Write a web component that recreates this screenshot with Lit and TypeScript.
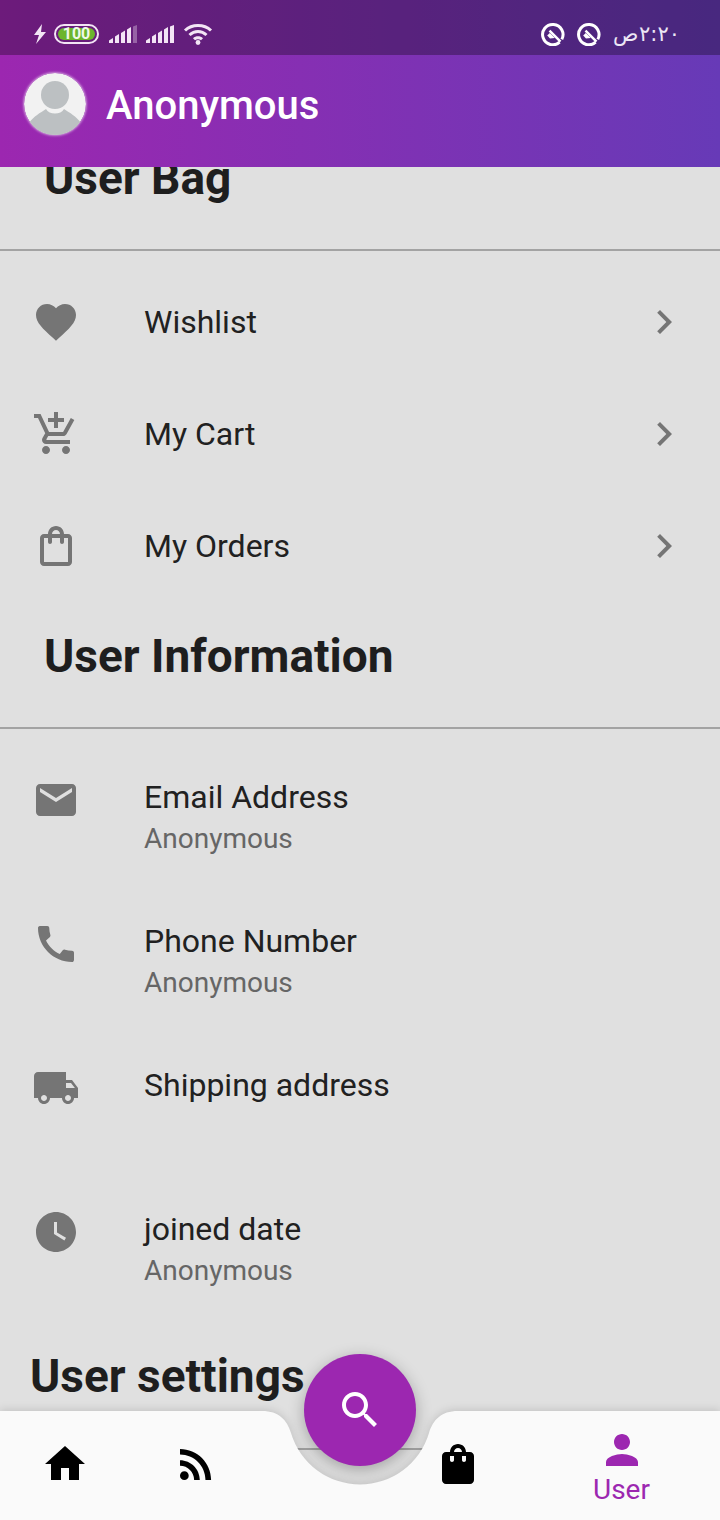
import { LitElement, html, css, svg } from 'lit';
import { customElement } from 'lit/decorators.js';

const ICONS: Record<string, string> = {
  heart: 'M12 21.35l-1.45-1.32C5.4 15.36 2 12.28 2 8.5 2 5.42 4.42 3 7.5 3c1.74 0 3.41.81 4.5 2.09C13.09 3.81 14.76 3 16.5 3 19.58 3 22 5.42 22 8.5c0 3.78-3.4 6.86-8.55 11.54L12 21.35z',
  cart: 'M11 9h2V6h3V4h-3V1h-2v3H8v2h3v3zm-4 9c-1.1 0-1.99.9-1.99 2S5.9 22 7 22s2-.9 2-2-.9-2-2-2zm10 0c-1.1 0-1.99.9-1.99 2s.89 2 1.99 2 2-.9 2-2-.9-2-2-2zm-9.83-3.25l.03-.12.9-1.63h7.45c.75 0 1.41-.41 1.75-1.03l3.86-7.01L19.42 4h-.01l-1.1 2-2.76 5H8.53l-.13-.27L6.16 6l-.95-2-.94-2H1v2h2l3.6 7.59-1.35 2.45c-.16.28-.25.61-.25.96 0 1.1.9 2 2 2h12v-2H7.42c-.13 0-.25-.11-.25-.25z',
  bagOutline: 'M18 6h-2c0-2.21-1.79-4-4-4S8 3.79 8 6H6c-1.1 0-2 .9-2 2v12c0 1.1.9 2 2 2h12c1.1 0 2-.9 2-2V8c0-1.1-.9-2-2-2zm-6-2c1.1 0 2 .9 2 2h-4c0-1.1.9-2 2-2zm6 16H6V8h2v2c0 .55.45 1 1 1s1-.45 1-1V8h4v2c0 .55.45 1 1 1s1-.45 1-1V8h2v12z',
  email: 'M20 4H4c-1.1 0-1.99.9-1.99 2L2 18c0 1.1.9 2 2 2h16c1.1 0 2-.9 2-2V6c0-1.1-.9-2-2-2zm0 4l-8 5-8-5V6l8 5 8-5v2z',
  phone: 'M20.01 15.38c-1.23 0-2.42-.2-3.53-.56-.35-.12-.74-.03-1.01.24l-1.57 1.97c-2.83-1.35-5.48-3.9-6.89-6.83l1.95-1.66c.27-.28.35-.67.24-1.02-.37-1.11-.56-2.3-.56-3.53 0-.54-.45-.99-.99-.99H4.19C3.65 3 3 3.24 3 3.99 3 13.28 10.73 21 20.01 21c.71 0 .99-.63.99-1.18v-3.45c0-.54-.45-.99-.99-.99z',
  truck: 'M20 8h-3V4H3c-1.1 0-2 .9-2 2v11h2c0 1.66 1.34 3 3 3s3-1.34 3-3h6c0 1.66 1.34 3 3 3s3-1.34 3-3h2v-5l-3-4zM6 18.5c-.83 0-1.5-.67-1.5-1.5s.67-1.5 1.5-1.5 1.5.67 1.5 1.5-.67 1.5-1.5 1.5zm13.5-9l1.96 2.5H17V9.5h2.5zm-1.5 9c-.83 0-1.5-.67-1.5-1.5s.67-1.5 1.5-1.5 1.5.67 1.5 1.5-.67 1.5-1.5 1.5z',
  clock: 'M12 2C6.5 2 2 6.5 2 12s4.5 10 10 10 10-4.5 10-10S17.5 2 12 2zm4.2 14.2L11 13V7h1.5v5.2l4.5 2.7-.8 1.3z',
  chevron: 'M10 6L8.59 7.41 13.17 12l-4.58 4.59L10 18l6-6z',
  home: 'M10 20v-6h4v6h5v-8h3L12 3 2 12h3v8z',
  rss: 'M6.18 15.64a2.18 2.18 0 1 0 0 4.36 2.18 2.18 0 0 0 0-4.36zM4 4.44v2.83c7.03 0 12.73 5.7 12.73 12.73h2.83c0-8.59-6.97-15.56-15.56-15.56zM4 10.1v2.83c3.9 0 7.07 3.17 7.07 7.07h2.83c0-5.47-4.43-9.9-9.9-9.9z',
  bag: 'M18 6h-2c0-2.21-1.79-4-4-4S8 3.79 8 6H6C4.9 6 4 6.9 4 8v12c0 1.1.9 2 2 2h12c1.1 0 2-.9 2-2V8c0-1.1-.9-2-2-2zM10 10c0 .55-.45 1-1 1s-1-.45-1-1V8h2v2zM12 4c1.1 0 2 .9 2 2h-4c0-1.1.9-2 2-2zM16 10c0 .55-.45 1-1 1s-1-.45-1-1V8h2v2z',
  person: 'M12 12c2.21 0 4-1.79 4-4s-1.79-4-4-4-4 1.79-4 4 1.79 4 4 4zm0 2c-2.67 0-8 1.34-8 4v2h16v-2c0-2.66-5.33-4-8-4z',
  search: 'M15.5 14h-.79l-.28-.27C15.41 12.59 16 11.11 16 9.5 16 5.91 13.09 3 9.5 3S3 5.91 3 9.5 5.91 16 9.5 16c1.61 0 3.09-.59 4.23-1.57l.27.28v.79l5 4.99L20.49 19l-4.99-5zm-6 0C7.01 14 5 11.99 5 9.5S7.01 5 9.5 5 14 7.01 14 9.5 11.99 14 9.5 14z',
};

const icon = (name: string) => html`<svg class="icon" viewBox="0 0 24 24"><path fill-rule="evenodd" d=${ICONS[name]}></path></svg>`;

// five bars with slanted tops, the last one greyed out on the first sim
const signal = (dim: boolean) => html`
  <svg class="signal" width="28" height="18" viewBox="0 0 28 18">
    <path d="M0 15.5 L4 13 V18 H0 Z"></path>
    <path d="M6 11.5 L10 9 V18 H6 Z"></path>
    <path d="M12 8 L16 5.5 V18 H12 Z"></path>
    <path d="M18 4.5 L22 2 V18 H18 Z"></path>
    <path d="M24 1.5 L28 0 V18 H24 Z" opacity=${dim ? 0.35 : 1}></path>
  </svg>`;

const dndRing = svg`
  <path d="M18.6 20.2 A10.2 10.2 0 1 1 20.8 17.4" fill="none" stroke="#fff" stroke-width="3"></path>
  <path d="M8.5 8.6 L19.5 19.6" fill="none" stroke="#fff" stroke-width="2.4"></path>
  <path d="M6.2 13.4 L8.8 11 L13.8 16 L9 16.6 Z" fill="#fff"></path>`;

@customElement('app-root')
export class AppRoot extends LitElement {
  static styles = css`
    :host {
      display: block;
      font-family: Roboto, 'Noto Sans', sans-serif;
    }
    .app {
      position: relative;
      width: 720px;
      height: 1520px;
      overflow: hidden;
      background: #e0e0e0;
      display: flex;
      flex-direction: column;
    }
    .header {
      position: relative;
      z-index: 2;
      flex: none;
      background: linear-gradient(90deg, #9c27b0, #673ab7);
    }
    .status {
      height: 55px;
      box-sizing: border-box;
      padding: 13px 40px 0 32px;
      display: flex;
      align-items: center;
      background: rgba(0, 0, 0, 0.3);
      color: #fff;
    }
    .status svg {
      display: block;
      fill: #f3e5f5;
    }
    .bolt {
      margin-right: 6px;
    }
    .battery {
      width: 45px;
      height: 20px;
      box-sizing: border-box;
      border: 2px solid #f3e5f5;
      border-radius: 10px;
      padding: 2px;
      margin-right: 10px;
    }
    .battery span {
      display: flex;
      align-items: center;
      justify-content: center;
      height: 100%;
      border-radius: 6px;
      background: #6cb52d;
      font-size: 16px;
      font-weight: 700;
      line-height: 12px;
      color: #f1f8e9;
    }
    .signal {
      margin-right: 9px;
    }
    .spacer {
      flex: 1;
    }
    .dnd {
      margin-right: 12px;
    }
    .time {
      font-family: 'DejaVu Sans', sans-serif;
      font-size: 21px;
      word-spacing: -6px;
      color: #ede7f6;
    }
    .toolbar {
      height: 112px;
      box-sizing: border-box;
      padding: 0 0 14px 24px;
      display: flex;
      align-items: center;
      gap: 20px;
    }
    .avatar {
      width: 62px;
      height: 62px;
      border-radius: 50%;
      box-shadow: 0 0 3px #fff;
      display: block;
    }
    .name {
      padding-top: 2px;
      font-size: 40px;
      font-weight: 500;
      color: #fff;
    }
    .content {
      flex: none;
      margin-top: -43px;
    }
    .section-title {
      box-sizing: border-box;
      height: 127px;
      padding: 28px 0 0 44px;
      font-size: 46px;
      font-weight: 700;
      line-height: 52px;
      color: #1e1e1e;
      border-bottom: 2px solid #a3a3a3;
      margin-bottom: 15px;
    }
    .section-title.flush {
      height: 130px;
      padding: 30px 0 0 30px;
    }
    .row {
      display: flex;
      align-items: center;
      height: 112px;
      padding: 0 32px;
    }
    .row .icon {
      width: 48px;
      height: 48px;
      flex: none;
      display: block;
      fill: #757575;
    }
    .lead {
      margin-right: 64px;
    }
    .row.tall {
      height: 144px;
      align-items: flex-start;
      padding-top: 32px;
      box-sizing: border-box;
    }
    .title {
      flex: 1;
      font-size: 32px;
      line-height: 42px;
      color: #212121;
    }
    .sub {
      font-size: 28px;
      line-height: 42px;
      height: 40px;
      color: #666;
    }
    .fab {
      position: absolute;
      left: 304px;
      top: 1354px;
      width: 112px;
      height: 112px;
      border-radius: 50%;
      background: #9c27b0;
      box-shadow: 0 4px 16px rgba(0, 0, 0, 0.28);
      display: flex;
      align-items: center;
      justify-content: center;
    }
    .fab .icon {
      width: 48px;
      height: 48px;
      display: block;
      fill: #fff;
    }
    .nav {
      position: absolute;
      left: 0;
      right: 0;
      bottom: 0;
      height: 109px;
      z-index: 1;
    }
    .nav-bg {
      position: absolute;
      inset: 0;
      width: 720px;
      height: 109px;
      overflow: visible;
      fill: #fafafa;
      filter: drop-shadow(0 -1px 4px rgba(0, 0, 0, 0.14));
    }
    .nav-items {
      position: relative;
      height: 100%;
      display: grid;
      grid-template-columns: 130px 132px 114px 163px 165px 16px;
    }
    .nav-item {
      display: flex;
      flex-direction: column;
      align-items: center;
      padding-top: 29px;
      color: #000;
    }
    .nav-item.active {
      padding-top: 15px;
      color: #9c27b0;
      font-size: 28px;
      line-height: 32px;
    }
    .nav-item .icon {
      width: 48px;
      height: 48px;
      display: block;
      fill: currentColor;
    }
  `;

  private row(name: string, label: string) {
    return html`
      <div class="row">
        <div class="lead">${icon(name)}</div>
        <div class="title">${label}</div>
        ${icon('chevron')}
      </div>
    `;
  }

  private infoRow(name: string, label: string, sub: string) {
    return html`
      <div class="row tall">
        <div class="lead">${icon(name)}</div>
        <div>
          <div class="title">${label}</div>
          <div class="sub">${sub}</div>
        </div>
      </div>
    `;
  }

  render() {
    return html`
      <div class="app">
        <div class="header">
          <div class="status">
            <svg class="bolt" width="16" height="20" viewBox="0 0 16 20"><path d="M10 0 L2 11 H7 L4 20 L14 8 H9 Z"></path></svg>
            <div class="battery"><span>100</span></div>
            ${signal(true)} ${signal(false)}
            <svg width="30" height="22" viewBox="0 0 30 22">
              <path fill="none" stroke="#f3e5f5" stroke-width="3" d="M2 7.5 C9 .8 21 .8 28 7.5 M6.5 12 C11.5 7.3 18.5 7.3 23.5 12"></path>
              <path d="M10 15.2 C13 12.6 17 12.6 20 15.2 L18 17.2 C16 15.8 14 15.8 12 17.2 Z"></path>
              <circle cx="15" cy="19.5" r="2.4"></circle>
            </svg>
            <div class="spacer"></div>
            <svg class="dnd" width="24" height="24" viewBox="0 0 24 24">${dndRing}</svg>
            <svg class="dnd" width="24" height="24" viewBox="0 0 24 24">${dndRing}</svg>
            <div class="time" dir="rtl">٢:٢٠ ص</div>
          </div>
          <div class="toolbar">
            <svg class="avatar" viewBox="0 0 62 62">
              <circle cx="31" cy="31" r="31" fill="#f2f2f2"></circle>
              <circle cx="31" cy="22" r="14" fill="#bcc0c2"></circle>
              <path d="M5 50 C10 43 16 40 22 36 C25 42 37 42 40 36 C46 40 52 43 57 50 A31 31 0 0 1 5 50 Z" fill="#bcc0c2"></path>
            </svg>
            <div class="name">Anonymous</div>
          </div>
        </div>

        <div class="content">
          <div class="section-title">User Bag</div>
          ${this.row('heart', 'Wishlist')}
          ${this.row('cart', 'My Cart')}
          ${this.row('bagOutline', 'My Orders')}
          <div class="section-title">User Information</div>
          ${this.infoRow('email', 'Email Address', 'Anonymous')}
          ${this.infoRow('phone', 'Phone Number', 'Anonymous')}
          ${this.infoRow('truck', 'Shipping address', '')}
          ${this.infoRow('clock', 'joined date', 'Anonymous')}
          <div class="section-title flush">User settings</div>
        </div>

        <div class="fab">${icon('search')}</div>
        <div class="nav">
          <svg class="nav-bg" viewBox="0 0 720 109">
            <path d="M0 0 H262 C279 0 287 9 291 22 A72 72 0 0 0 429 22 C433 9 441 0 458 0 H720 V109 H0 Z"></path>
          </svg>
          <div class="nav-items">
            <div class="nav-item">${icon('home')}</div>
            <div class="nav-item">${icon('rss')}</div>
            <div></div>
            <div class="nav-item">${icon('bag')}</div>
            <div class="nav-item active">${icon('person')}<span>User</span></div>
          </div>
        </div>
      </div>
    `;
  }
}
